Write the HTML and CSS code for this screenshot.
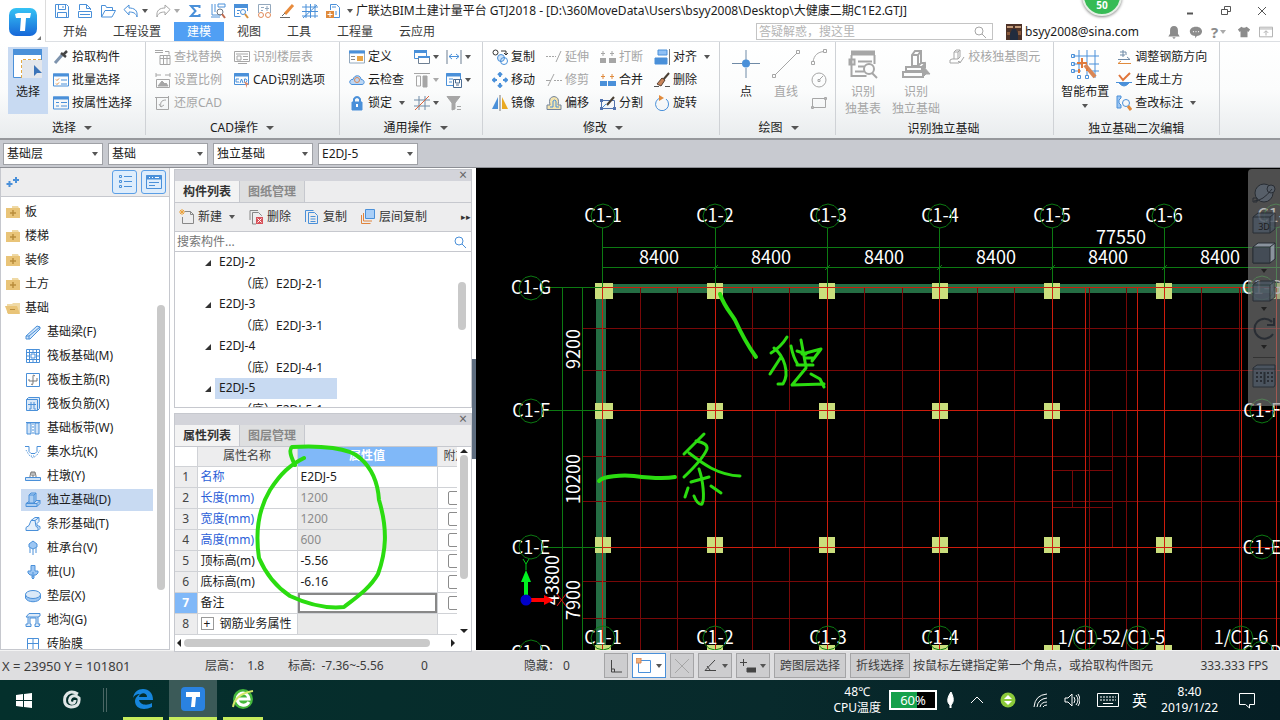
FILE: index.html
```html
<!DOCTYPE html>
<html lang="zh-CN">
<head>
  <meta charset="UTF-8">
  <title>广联达BIM土建计量平台 GTJ2018</title>
  <link rel="stylesheet" href="styles.css">
</head>
<body>

  <!-- shared icons -->
  <svg class="sprite" aria-hidden="true">
    <symbol id="folder" viewBox="0 0 16 16"><path d="M7 4V2h6l1 2z" fill="#efd9a5" stroke="none"/><path d="M1 4h14v10H1z" fill="#e9c478" stroke="none"/><path d="M8 6v6M5 9h6" stroke="#b98d3c" stroke-width="1.500"/></symbol>
    <symbol id="glass" viewBox="0 0 16 16"><circle cx="7" cy="7" r="4"/><path d="M10 10l4 4"/></symbol>
    <symbol id="bubble" viewBox="-13 -13 26 26"><path d="M0-12L6-10.400 10.400-6 12 0 10.400 6 6 10.400 0 12-6 10.400-10.400 6-12 0-10.400-6-6-10.400z" fill="none" stroke="#0c7a12"/></symbol>
  </svg>

  <header class="header">
    <div class="logo">
      <svg width="28" height="28" viewBox="0 0 28 28"><defs><linearGradient id="lg" x2="0" y2="1"><stop stop-color="#35c3f5"/><stop offset="1" stop-color="#1767d8"/></linearGradient></defs><rect width="28" height="28" rx="7" fill="url(#lg)"/><path d="M6 6l3-1h13l-1 5h-4l-1 13h-5l1-13H7z" fill="#fff"/></svg>
      <span class="corner"></span>
    </div>
    <div class="header-rows">
      <div class="title-row">
        <nav class="quick">
          <button aria-label="保存"><svg class="ico" viewBox="0 0 16 16"><path d="M1.500 1.500h11l2 2v11h-13zM4.500 1.500v5h7v-5M3.500 14.500v-5h9v5M9 3v2"/></svg></button>
          <button aria-label="新建"><svg class="ico" viewBox="0 0 16 16"><path d="M2.500 7V1.500h7l4 4V7M9.500 1.500v4h4M1.500 8.500h13v6h-13zM3 11.500h10"/></svg></button>
          <button aria-label="打开"><svg class="ico" viewBox="0 0 16 16"><path d="M1.500 14V2.500h4l1 2h6V7M1.500 14L5 7.500h10.500L12 14z"/></svg></button>
          <button aria-label="撤销"><svg class="ico" viewBox="0 0 16 16"><path d="M1 6.500L6 2v3c5 0 9 2 8 9-1-4-4-5-8-5v3z"/></svg><i class="arrow"></i></button>
          <button aria-label="重做"><svg class="ico gray" viewBox="0 0 16 16"><path d="M15 6.500L10 2v3c-5 0-9 2-8 9 1-4 4-5 8-5v3z"/></svg><i class="arrow light"></i></button>
          <button aria-label="汇总计算"><svg class="ico" viewBox="0 0 16 16"><path d="M12.500 5V3H4l4.500 5L4 13h8.500v-2" stroke-width="2"/></svg></button>
          <button aria-label="查看工程量"><svg class="ico" viewBox="0 0 16 16"><path d="M2 1v11h9M5 1v8M8 4h7V1H8zM1 14h9"/><circle cx="10" cy="9" r="3" stroke="#6b7784"/><path d="M12 11l3 4" stroke="#c06a4e" stroke-width="2"/></svg></button>
          <button aria-label="查看报表"><svg class="ico" viewBox="0 0 16 16"><path d="M1 3h14" stroke-width="4"/><path d="M1.500 4v9.500h6M14.500 4v4M4 7.500h3M4 10.500h2"/><circle cx="10" cy="9" r="2.500"/><path d="M12 11l3 4" stroke="#d8913c" stroke-width="2"/></svg></button>
          <button aria-label="检查"><svg class="ico" viewBox="0 0 16 16"><path d="M2.500 10V1.500h12V10M5 4.500h3M5 7.500h2M11 3v5M9 5.500h4" stroke="#93a8bd"/><circle cx="5" cy="12" r="2.500" stroke="#e08a5a"/><circle cx="12" cy="12" r="2.500" stroke="#e08a5a"/></svg></button>
          <button aria-label="画笔"><svg class="ico" viewBox="0 0 16 16"><path d="M14 2L6 11" stroke="#e88b3c" stroke-width="3"/><path d="M6 10l-3 3M1 14.500h10" stroke="#666"/></svg></button>
          <button aria-label="轴网"><svg class="ico" viewBox="0 0 16 16"><path d="M4 1v14M8.500 1v14M13 1v14M0 4h16M0 8.500h16M0 13h16M1 15L15 2"/></svg></button>
          <button aria-label="导入"><svg class="ico" viewBox="0 0 16 16"><path d="M5.500 7V1.500h6l3 3v10H9M7 4h4M11 12V8"/><path d="M1 8h8v7H1z" fill="#e08a3c" stroke="none"/><path d="M5 9v5M2.500 11.500h5" stroke="#fff"/></svg></button>
        </nav>
        <i class="arrow more"></i>
        <span class="app-title">广联达BIM土建计量平台 GTJ2018 - [D:\360MoveData\Users\bsyy2008\Desktop\大健康二期C1E2.GTJ]</span>
        <div class="window-buttons">
          <button aria-label="最小化"><svg width="12" height="12"><path d="M3 8.500h6" stroke-width="2"/></svg></button>
          <button aria-label="还原"><svg width="12" height="12"><path d="M1.500 4.500h6v5h-6zM4.500 4V1.500h6v5H8"/></svg></button>
          <button aria-label="关闭"><svg width="12" height="12"><path d="M2 2l8 8M10 2l-8 8"/></svg></button>
        </div>
      </div>
      <div class="tab-row">
        <nav class="tabs">
          <button>开始</button><button>工程设置</button><button class="active">建模</button><button>视图</button><button>工具</button><button>工程量</button><button>云应用</button>
        </nav>
        <div class="account">
          <div class="ask"><input type="text" aria-label="搜索" placeholder="答疑解惑，搜这里"><svg class="ico gray" viewBox="0 0 16 16"><use href="#glass"/></svg></div>
          <svg class="avatar" viewBox="0 0 16 16"><path d="M0 0h16v16H0z" fill="#4d3227"/><path d="M1 2h6v2H1zM9 2h6v2H9z" fill="#c39b7a"/><path d="M6 5h4l2 5v6H4v-6z" fill="#222c3e"/><path d="M1 8h3v3H1zM12 7h3v4h-3z" fill="#8a5a3c"/></svg>
          <span class="mail">bsyy2008@sina.com</span>
          <div class="tray">
            <svg class="solid" viewBox="0 0 16 16"><path d="M8 1c3 0 4.500 2 4.500 5v4l2 3h-13l2-3V6C3.500 3 5 1 8 1zM6 14h4l-2 2z"/></svg>
            <svg class="solid" viewBox="0 0 16 16"><path d="M8 2c9 0 9 10 1 10.500L7 15v-2.500C-1.500 12-1 2 8 2z"/><path d="M4.500 7.500h1M7.500 7.500h1M10.500 7.500h1" stroke="#fff" stroke-width="1.500"/></svg>
            <span class="help">?<i class="arrow light"></i></span>
            <svg class="solid" viewBox="0 0 16 16"><path d="M5 2q3 2 6 0l4 3-2 3-1-1v7H4V7L3 8 1 5z"/></svg>
            <svg class="ico gray" viewBox="0 0 16 16"><path d="M.5 2.500h15v11H.5zM.5 4.500h15M8 12V7M5.500 9L8 6.500 10.500 9"/></svg>
          </div>
        </div>
      </div>
    </div>
    <span class="ball">50</span>
  </header>

  <section class="ribbon">
    <div class="group pick">
      <div class="group-body g5">
        <button class="big picked"><svg class="ico" viewBox="0 0 30 30"><path d="M.5.500h28v28H.5z" fill="#fff"/><path d="M.5.500h28v5H.5z" fill="#4a90d9"/><path d="M9 11h20v18H9z" fill="#e4e7ec" stroke="none"/><path d="M8.500 29V10.500H29" stroke="#e3aa45" stroke-dasharray="3 2"/><path d="M21 16v11l3-3h5z" fill="#3c74b8" stroke="none"/></svg>选择</button>
        <div class="col">
          <button><svg class="ico" viewBox="0 0 16 16"><path d="M2 14l7-8" stroke="#7d93ad" stroke-width="3"/><path d="M10 6l4-4M8 4l5 4" stroke="#444" stroke-width="2.500"/></svg>拾取构件</button>
          <button><svg class="ico" viewBox="0 0 16 16"><path d="M.5 2h15v12H.5z"/><path d="M0 3h16" stroke-width="3"/><path d="M3 7.500l1 1 2-2M3 11.500l1 1 2-2" stroke="#e08a3c"/><path d="M8 8h6M8 12h6"/></svg>批量选择</button>
          <button><svg class="ico" viewBox="0 0 16 16"><path d="M.5 2h15v12H.5z"/><path d="M0 3h16" stroke-width="3"/><path d="M3 7.500h3M8 7.500h6M3 11h3M8 11h6"/></svg>按属性选择</button>
        </div>
      </div>
      <h3>选择<i class="arrow big-arrow"></i></h3>
    </div>

    <div class="group cad">
      <div class="group-body g12">
        <div class="col">
          <button disabled><svg class="ico" viewBox="0 0 16 16"><path d="M0 1.500h8M0 3.500h8M10 2.500h4v3M5 6.500h10v9H5zM5 9.500h10M8.500 7v8M12 7v8"/></svg>查找替换</button>
          <button disabled><svg class="ico" viewBox="0 0 16 16"><path d="M1 3h5M10 3h5M1 1v4M15 1v4M1.500 7.500h13v8h-13z"/><path d="M3 14l4-5 3 3 1-1 2 3z" fill="#a6a6a6"/></svg>设置比例</button>
          <button disabled><svg class="ico" viewBox="0 0 16 16"><path d="M1.500 2.500h12v12h-12zM0 2.500h3M13.500 1v3M11 5c-5 0-6 3-5 7M4 9l2 3 3-2"/></svg>还原CAD</button>
        </div>
        <div class="col">
          <button disabled><svg class="ico" viewBox="0 0 16 16"><path d="M.5 2.500h15v10H.5zM2 5h12M3 7h4v4H3zM9 7.500h5M9 10.500h5M4 14.500h9"/></svg>识别楼层表</button>
          <button><svg class="ico" viewBox="0 0 16 16"><path d="M.5 1.500h14v11H.5z"/><path d="M0 3h15" stroke-width="3"/><path d="M5 7H2v3h3M6 11l1.500-4L9 11M10.500 7v3.500h1.500q2-2 0-3.500z"/><path d="M10 9l5 3-2 1v3z" fill="#e08a6a" stroke="none"/></svg>CAD识别选项</button>
        </div>
      </div>
      <h3>CAD操作<i class="arrow big-arrow"></i></h3>
    </div>

    <div class="group common">
      <div class="group-body">
        <div class="col wide">
          <button><svg class="ico" viewBox="0 0 16 16"><path d="M.5 2h15v12H.5z" stroke="#93a8bd"/><path d="M0 3h16" stroke-width="3"/><path d="M2 7.500h4M2 10.500h4" stroke="#888"/><path d="M8 7h6v5H8z" fill="#e9a545" stroke="none"/></svg>定义</button>
          <button><svg class="ico" viewBox="0 0 16 16"><path d="M3 12.500c-4-1-2-6 1-5 1-5 8-5 8 0 4 0 4 5 1 5z" fill="#bcd6f3"/><circle cx="8" cy="8" r="2.500" stroke="#d98655"/></svg>云检查</button>
          <button><svg class="ico" viewBox="0 0 16 16"><path d="M5 7V4q3-4 6 0v3" stroke-width="2"/><path d="M3 7h10v8H3z" fill="#4a90d9"/><path d="M8 9v3" stroke="#fff" stroke-width="2"/></svg>锁定<i class="arrow push"></i></button>
        </div>
        <div class="col drop">
          <button aria-label="窗口"><svg class="ico" viewBox="0 0 16 16"><path d="M.5 1.500h12v8H.500z"/><path d="M0 2.500h13" stroke-width="3"/><path d="M4.500 7.500h11v7h-11z" fill="#fff" stroke="#6d7f92"/><path d="M4 8h12" stroke-width="2"/></svg><i class="arrow"></i></button>
          <button aria-label="对齐柱" disabled><svg class="ico" viewBox="0 0 16 16"><path d="M0 1.500h16M2.500 4v10h4V4z"/><path d="M9 4h4v11H9z" fill="#a6a6a6"/></svg><i class="arrow"></i></button>
          <button aria-label="轴线"><svg class="ico slate" viewBox="0 0 16 16"><path d="M5 1v14M11 1v14M0 5h16M0 11h16"/><path d="M1 15L15 1" stroke="#d9643c"/></svg><i class="arrow"></i></button>
        </div>
        <div class="col drop">
          <button aria-label="长度标注"><svg class="ico" viewBox="0 0 16 16"><path d="M1 1v14M15 1v14" stroke="#6d7f92"/><path d="M3 7.500h10M6 5L3 7.500 6 10M10 5l3 2.500-3 2.500"/></svg><i class="arrow"></i></button>
          <button aria-label="图元存盘"><svg class="ico" viewBox="0 0 16 16"><path d="M.5 1.500h14v12H.5z"/><path d="M0 3h15" stroke-width="3"/><path d="M3 7h4M3 10h3"/><path d="M7.500 7.500h8v8h-8z" fill="#fff" stroke="#4c6c92"/><path d="M9.500 8v3h4V8M10 13h3" stroke="#4c6c92"/></svg><i class="arrow"></i></button>
          <button aria-label="图元过滤"><svg class="ico gray" viewBox="0 0 16 16"><path d="M1 1.500h13L9 8v6l-3 1V8z" fill="#a6a6a6"/><path d="M11 11.500h4M11 14.500h4"/></svg></button>
        </div>
      </div>
      <h3>通用操作<i class="arrow big-arrow"></i></h3>
    </div>

    <div class="group modify">
      <div class="group-body g11">
        <div class="col">
          <button><svg class="ico" viewBox="0 0 16 16"><circle cx="3.500" cy="3.500" r="2.500" stroke="#333"/><circle cx="9" cy="9" r="3.500" fill="#cfe3f8"/><circle cx="12" cy="12" r="3.500"/><path d="M9 2h5v4M12 4l2 2 2-2" stroke="#333"/></svg>复制</button>
          <button><svg class="ico" viewBox="0 0 16 16"><path d="M8 1v4M6 3l2-2 2 2M8 15v-4M6 13l2 2 2-2M1 8h4M3 6L1 8l2 2M15 8h-4M13 6l2 2-2 2" stroke-width="2"/></svg>移动</button>
          <button><svg class="ico" viewBox="0 0 16 16"><path d="M6 2v12H0z" fill="#4a90d9" stroke="none"/><path d="M10 2v12h6z" fill="#e9a922" stroke="none"/><path d="M8 0v16" stroke="#777"/></svg>镜像</button>
        </div>
        <div class="col">
          <button disabled><svg class="ico" viewBox="0 0 16 16"><path d="M0 7.500h10" stroke-dasharray="2 1"/><path d="M10 13l5-11"/></svg>延伸</button>
          <button disabled><svg class="ico" viewBox="0 0 16 16"><path d="M0 8.500h5M2 14L8 2"/><path d="M8 8.500h8" stroke-dasharray="2 1"/></svg>修剪</button>
          <button><svg class="ico" viewBox="0 0 16 16"><path d="M1 14.500V10h3q-2-8 4-8.500 6 .5 4 8.500h3v4.500z" fill="#f4e4ae" stroke="#72839a"/><path d="M4 12h3V6q2-2 3 0v6h3"/></svg>偏移</button>
        </div>
        <div class="col">
          <button disabled><svg class="ico" viewBox="0 0 16 16"><path d="M0 9h6v5H0zM9 9h7v5H9z" fill="#a6a6a6" stroke="none"/><path d="M3 7V2M1 4.500h4M12 7V2M10 4.500h4"/></svg>打断</button>
          <button><svg class="ico" viewBox="0 0 16 16"><path d="M0 9h7v5H0zM8 9h8v5H8z" fill="#4a90d9" stroke="none"/><path d="M3 7V2M1 4.500h4M12 7V2M10 4.500h4" stroke="#e08a3c"/></svg>合并</button>
          <button><svg class="ico" viewBox="0 0 16 16"><path d="M1.500 5.500h13v8h-13z" stroke="#5273ae"/><path d="M0 15L6 9" stroke="#4a90d9"/><path d="M7 10l7-8" stroke="#4a4035" stroke-width="2"/><path d="M0 4h3v3H0zM0 12h3v3H0zM13 12h3v3h-3z" fill="#5273ae" stroke="none"/></svg>分割</button>
        </div>
        <div class="col">
          <button><svg class="ico" viewBox="0 0 16 16"><path d="M4 1h9v5H4z" fill="#8fc0f5"/><path d="M1 9h12v6H1z" fill="#4a90d9"/><path d="M15.500 0v16" stroke="#777"/></svg>对齐<i class="arrow push"></i></button>
          <button><svg class="ico" viewBox="0 0 16 16"><path d="M9 8l6-7" stroke="#4a4035" stroke-width="2"/><path d="M3 12l5-6 3 2-4 6z" fill="#c9855a" stroke="#5a4334"/><path d="M0 14.500h5M11 14.500h5" stroke="#555"/></svg>删除</button>
          <button><svg class="ico" viewBox="0 0 16 16"><path d="M12 4a6.500 6.500 0 1 1-6-1"/><path d="M5 0l5 3-5 3z" fill="#e08a3c" stroke="none"/></svg>旋转</button>
        </div>
      </div>
      <h3>修改<i class="arrow big-arrow"></i></h3>
    </div>

    <div class="group draw">
      <div class="group-body">
        <button class="big"><svg class="ico slate" viewBox="0 0 30 30"><path d="M15 1v10M15 19v10M1 14.500h10M19 14.500h10"/><circle cx="15" cy="14.500" r="4" fill="#4a90d9" stroke="none"/></svg>点</button>
        <button class="big" disabled><svg class="ico" viewBox="0 0 30 30"><path d="M4 26L26 4M1.500 25.500h3v3h-3zM25.500 1.500h3v3h-3z"/></svg>直线</button>
        <div class="col">
          <button aria-label="圆弧" disabled><svg class="ico" viewBox="0 0 16 16"><path d="M2 13C3 6 7 3 13 2.500M.5 12.500h3v3h-3zM12.500.500h3v3h-3z"/></svg></button>
          <button aria-label="圆" disabled><svg class="ico" viewBox="0 0 16 16"><circle cx="8" cy="8" r="7"/><path d="M7 7.500h2v2H7zM9 7l3-3"/></svg></button>
          <button aria-label="矩形" disabled><svg class="ico" viewBox="0 0 16 16"><path d="M1.500 3.500h13v9h-13zM.5 11.500h2v2h-2zM13.500 2.500h2v2h-2z"/></svg></button>
        </div>
      </div>
      <h3>绘图<i class="arrow big-arrow"></i></h3>
    </div>

    <div class="group detect">
      <div class="group-body g9">
        <button class="big" disabled><svg class="ico" viewBox="0 0 30 30"><path d="M3 4h24" stroke-width="5"/><path d="M3.500 6v21h15M26.500 6v9M10 12.500h14M10 17.500h6M7 22.500h9M1.500 10.500h5v5h-5z" stroke-width="2"/><circle cx="21" cy="20" r="5" stroke-width="2"/><path d="M24 24l5 5" stroke-width="2"/></svg>识别<br>独基表</button>
        <button class="big" disabled><svg class="ico" viewBox="0 0 30 30"><path d="M11 17V6l3-4h6v12l-3 3zM11 6h6v11M17 6l3-4M5 22v-4h16v4zM2 28v-5h20v5zM21 18l3-3v4M20 14h4" stroke-width="2"/><path d="M22 17v11l3-3h4z" fill="#a6a6a6"/></svg>识别<br>独立基础</button>
        <div class="col">
          <button disabled><svg class="ico" viewBox="0 0 16 16"><path d="M5 10V3l2-2h4v7l-2 2zM5 3h4v7M9 3l2-2M1 14v-3l2-1h2M1 14h9l1-2M9 12l2 2 4-6"/></svg>校核独基图元</button>
        </div>
      </div>
      <h3>识别独立基础</h3>
    </div>

    <div class="group smart">
      <div class="group-body g7">
        <button class="big"><svg class="ico" viewBox="0 0 30 30"><path d="M9 1v20M17 1v25M25 1v28M3 7h26M3 15h9M3 22h8M19 15h10M20 22h9M1.500 5.500h3v3h-3zM1.500 13.500h3v3h-3zM1.500 20.500h3v3h-3zM7.500 26.500h3v3h-3zM15.500 26.500h3v3h-3z"/><path d="M15 16l10 12" stroke="#d98655" stroke-width="4"/><path d="M12 9v10M7 14h10M9 20v4M17 19v3" stroke="#e07a3c" stroke-width="2"/></svg>智能布置<i class="arrow"></i></button>
        <div class="col">
          <button><svg class="ico slate" viewBox="0 0 16 16"><path d="M7 1v7M4 3h6v3M4 6h5M2 10.500h12M11 8l3 2.500"/><path d="M15 14.500H2M5 12l-3 2.500" stroke="#e08a3c"/></svg>调整钢筋方向</button>
          <button><svg class="ico" viewBox="0 0 16 16"><path d="M3 3l4 5 7-7" stroke="#e0763c" stroke-width="2"/><path d="M0 10.500h16M3 11q5 6 10 0" fill="#4a90d9"/></svg>生成土方</button>
          <button><svg class="ico" viewBox="0 0 16 16"><path d="M1 1h4v2l-2 2v3l2 2v3H1z" fill="#9cc6f3"/><circle cx="10" cy="8" r="3.500"/><path d="M12 11l3 4" stroke="#e08a3c" stroke-width="3"/></svg>查改标注<i class="arrow push"></i></button>
        </div>
      </div>
      <h3>独立基础二次编辑</h3>
    </div>
  </section>

  <section class="selectors">
    <span class="combo"><select aria-label="楼层"><option>基础层</option></select></span>
    <span class="combo"><select aria-label="构件大类"><option>基础</option></select></span>
    <span class="combo"><select aria-label="构件类型"><option>独立基础</option></select></span>
    <span class="combo"><select aria-label="构件"><option>E2DJ-5</option></select></span>
  </section>

  <main class="main">
    <aside class="nav">
      <div class="nav-head">
        <svg class="ico plus" viewBox="0 0 16 16"><path d="M3.500 7v6M.5 10h6M10 3v6M7 6h6" stroke-width="2"/></svg>
        <button aria-label="列表"><svg class="ico" viewBox="0 0 16 16"><path d="M2.500 1.500h2v2h-2zM2.500 6.500h2v2h-2zM2.500 11.500h2v2h-2zM7 2.500h8M7 7.500h8M7 12.500h8"/></svg></button>
        <button aria-label="视图"><svg class="ico" viewBox="0 0 16 16"><path d="M.5 1.500h15v13H.5z"/><path d="M0 3.500h16" stroke-width="4"/><path d="M3 3.500h1M6 3.500h1M9 3.500h4" stroke="#fff"/><path d="M3 8.500h10M3 11.500h6"/></svg></button>
      </div>
      <div class="nav-body">
        <ul class="nav-list">
          <li><svg class="ico"><use href="#folder"/></svg>板</li>
          <li><svg class="ico"><use href="#folder"/></svg>楼梯</li>
          <li><svg class="ico"><use href="#folder"/></svg>装修</li>
          <li><svg class="ico"><use href="#folder"/></svg>土方</li>
          <li><svg class="ico" viewBox="0 0 16 16"><path d="M2 13V4h5l1-1h7v10z" fill="#efd9a5" stroke="none"/><path d="M0 6h12l3 8H3z" fill="#e9c478" stroke="none"/><path d="M5 9.500h5" stroke="#b98d3c"/></svg>基础</li>
          <li class="child"><svg class="ico" viewBox="0 0 16 16"><path d="M1 12L12 2l3 1v2L5 15H1zM1 12h3v3M4 12L15 3" fill="#cfe3f8"/></svg>基础梁(F)</li>
          <li class="child"><svg class="ico" viewBox="0 0 16 16"><path d="M1.500 1.500h13v13h-13zM4.500 1v14M11.500 1v14M1 4.500h14M1 11.500h14M8 1v3M8 12v3M1 8h3M12 8h3M6 6h4v4H6z"/></svg>筏板基础(M)</li>
          <li class="child"><svg class="ico" viewBox="0 0 16 16"><path d="M1.500 1.500h13v13h-13z"/><path d="M10 4q-2-2-2 0v7q0 3-2 1M4 7v2h8V6" stroke="#777"/></svg>筏板主筋(R)</li>
          <li class="child"><svg class="ico" viewBox="0 0 16 16"><path d="M1.500 3.500h11v11h-11zM1.500 3.500l2-2h11v11l-2 2M3 8.500h8M6 6v7H4M9 6v7h2" fill="#dbe9f8"/></svg>筏板负筋(X)</li>
          <li class="child"><svg class="ico" viewBox="0 0 16 16"><path d="M2 3h4v11H2zM10 3h4v11h-4zM1 2.500h14" fill="#cfe3f8"/><path d="M8 3v11" stroke-dasharray="2 1"/></svg>基础板带(W)</li>
          <li class="child"><svg class="ico" viewBox="0 0 16 16"><path d="M0 2.500h4v5l2 2h4l2-2v-5h4"/><path d="M1 6l3 5 4 3 4-3 3-5M6 12h4" stroke-dasharray="1 1"/></svg>集水坑(K)</li>
          <li class="child"><svg class="ico" viewBox="0 0 16 16"><path d="M.5 9.500h15v3H.5z" fill="#cfe3f8"/><path d="M5 9V8l1-4h4l1 4v1M7 4v4h2V4" stroke="#777"/></svg>柱墩(Y)</li>
          <li class="child on"><svg class="ico" viewBox="0 0 16 16"><path d="M4 11V3l2-2h5v8l-2 2zM4 3h5v8M9 3l2-2M1 14.500v-3l3-2M1 11.500h11v3H1M12 11.500l3-3v3l-3 3M11 8.500h4" fill="#aacdf2"/></svg>独立基础(D)</li>
          <li class="child"><svg class="ico" viewBox="0 0 16 16"><path d="M1 14.500v-3l3-2 2-5 4-3h4v4l-2 2v2l3 1v2l-2 2zM6 4.500h4l1 6 2 1v3M10 4.500l4-3" fill="#e4effb"/></svg>条形基础(T)</li>
          <li class="child"><svg class="ico" viewBox="0 0 16 16"><path d="M8 1l4 3v3L8 9 4 7V4z" fill="#9cc6f3"/><path d="M5 8v5M11 8v5M8 9v6"/></svg>桩承台(V)</li>
          <li class="child"><svg class="ico" viewBox="0 0 16 16"><path d="M6 1.500h4V7h3v2l-2 2H9v3l-1 1-1-1v-3H5L3 9V7h3z" fill="#9cc6f3"/><path d="M8 8v5"/></svg>桩(U)</li>
          <li class="child"><svg class="ico" viewBox="0 0 16 16"><path d="M.5 6v4c2 5 13 5 15 0V6" fill="#9cc6f3"/><ellipse cx="8" cy="6.500" rx="7.500" ry="4" fill="#dbe9f8"/></svg>垫层(X)</li>
          <li class="child"><svg class="ico" viewBox="0 0 16 16"><path d="M1 5l3-3.500h11V4l-2 1zM3 5v7H1v2.500h5V12H5V6h6v6h-1v2.500h4L15 12h-2V5" fill="#dbe9f8"/></svg>地沟(G)</li>
          <li class="child"><svg class="ico" viewBox="0 0 16 16"><path d="M2.500 2.500h11v12h-11zM2 7.500h12M8 3v12"/></svg>砖胎膜</li>
        </ul>
        <div class="thumb"></div>
      </div>
    </aside>

    <div class="side">
      <section class="panel">
        <div class="strip">×</div>
        <div class="panel-tabs"><button class="active">构件列表</button><button>图纸管理</button></div>
        <div class="tools">
          <button><svg class="ico" viewBox="0 0 16 16"><path d="M5.500 2.500h6l3 3v9h-11V8M11.500 2.500v3h3" stroke="#888"/><path d="M3 0v6M0 3h6M1 1l4 4M5 1L1 5" stroke="#eba13a"/></svg>新建<i class="arrow push"></i></button>
          <button><svg class="ico" viewBox="0 0 16 16"><path d="M2 11V1.500h8M4.500 7V3.500h6l3 3V7M4.500 7v8H8" stroke="#888"/><path d="M8 8h7v7H8z" fill="#d8525a" stroke="none"/><path d="M9.500 9.500l4 4M13.500 9.500l-4 4" stroke="#fff"/></svg>删除</button>
          <button><svg class="ico" viewBox="0 0 16 16"><path d="M1.500 13V1.500h8M4.500 3.500h6l3 3v8h-9zM6.500 7.500h5M6.500 10h5M6.500 12.500h5"/></svg>复制</button>
          <button><svg class="ico" viewBox="0 0 16 16"><path d="M5.500.500h9v9h-9z" fill="#a9cff8"/><path d="M3.500 4v8H12M1.500 6v8.500h9" stroke="#e0843c"/></svg>层间复制</button>
          <span class="next">▸▸</span>
        </div>
        <div class="find"><input type="text" aria-label="搜索构件" placeholder="搜索构件..."><svg class="ico" viewBox="0 0 16 16"><use href="#glass"/></svg></div>
        <div class="tree-box">
          <ul class="tree">
            <li><span>E2DJ-2</span></li>
            <li class="leaf">（底）E2DJ-2-1</li>
            <li><span>E2DJ-3</span></li>
            <li class="leaf">（底）E2DJ-3-1</li>
            <li><span>E2DJ-4</span></li>
            <li class="leaf">（底）E2DJ-4-1</li>
            <li><span class="on">E2DJ-5</span></li>
            <li class="leaf">（底）E2DJ-5-1</li>
          </ul>
          <div class="thumb"></div>
        </div>
      </section>

      <section class="panel props">
        <div class="strip">×</div>
        <div class="panel-tabs"><button class="active">属性列表</button><button>图层管理</button></div>
        <div class="grid-box">
          <div class="grid-clip">
            <table>
              <tr><th class="num blank"></th><th class="name">属性名称</th><th class="value">属性值</th><th>附加</th></tr>
              <tr><td class="num">1</td><td class="key">名称</td><td>E2DJ-5</td><td></td></tr>
              <tr><td class="num">2</td><td class="key">长度(mm)</td><td class="ro">1200</td><td><input type="checkbox" aria-label="长度附加"></td></tr>
              <tr><td class="num">3</td><td class="key">宽度(mm)</td><td class="ro">1200</td><td><input type="checkbox" aria-label="宽度附加"></td></tr>
              <tr><td class="num">4</td><td class="key">高度(mm)</td><td class="ro">600</td><td><input type="checkbox" aria-label="高度附加"></td></tr>
              <tr><td class="num">5</td><td>顶标高(m)</td><td>-5.56</td><td><input type="checkbox" aria-label="顶标高附加"></td></tr>
              <tr><td class="num">6</td><td>底标高(m)</td><td>-6.16</td><td><input type="checkbox" aria-label="底标高附加"></td></tr>
              <tr><td class="num now">7</td><td>备注</td><td class="edit"><input type="text" aria-label="备注"></td><td><input type="checkbox" aria-label="备注附加"></td></tr>
              <tr><td class="num">8</td><td><div class="parent"><button class="expand" aria-label="展开">+</button>钢筋业务属性</div></td><td class="ro"></td><td></td></tr>
            </table>
          </div>
          <div class="vbar"><i class="up"></i><div class="thumb"></div><i class="down"></i></div>
        </div>
        <div class="hbar"><i class="left"></i><div class="thumb"></div><i class="right"></i></div>
        <svg class="ink" viewBox="250 440 140 172"><path d="M295 465C290 455 289 449 292 447 320 445 350 448 360 458 374 470 378 485 379 500 388 530 386 552 378 574 370 588 357 597 344 607 325 609 305 603 290 596 275 586 265 572 259 558 254 525 261 505 270 490 281 473 290 465 304 458"/></svg>
      </section>
    </div>

    <div class="splitter"><i></i></div>

    <div class="canvas">
      <svg class="plan" width="100%" height="100%">
        <g transform="translate(-476 -168)">
          <!-- walls -->
          <path d="M596 284H1280V293H606V650H596z" fill="#256d43"/>
          <!-- footings -->
          <path class="pad" d="M595 283h18v16h-18zM707 283h16v16h-16zM819 283h16v16h-16zM932 283h16v16h-16zM1044 283h16v16h-16zM1156 283h16v16h-16zM1270 283h10v16h-10zM595 403h18v16h-18zM707 403h16v16h-16zM819 403h16v16h-16zM932 403h16v16h-16zM1044 403h16v16h-16zM595 537h16v16h-16zM707 537h16v16h-16zM819 537h16v16h-16zM932 537h16v16h-16zM1044 537h16v16h-16zM1156 537h16v16h-16zM595 645h16v6h-16zM707 645h16v6h-16zM819 645h16v6h-16zM932 645h16v6h-16zM1044 645h16v6h-16zM1156 645h16v6h-16z"/>
          <!-- secondary beams -->
          <path class="thin" d="M640.500 288V650M677.500 288V650M752.500 288V650M789.500 288V410M775.500 411V547M789.500 548V650M864.500 288V650M902.500 288V650M977.500 288V650M1014.500 288V650M1089.500 288V650M1126.500 288V650M1201.500 288V650M1239.500 288V650M583 328.500H1280M583 370.500H1280M583 456.500H1280M583 501.500H1280M583 581.500H1280M583 618.500H1280M1112.500 411V547M1053 470.500H1112M1053 507.500H1112M1072.500 470V507"/>
          <!-- dimension lines -->
          <path class="dim" d="M602.500 228V287M715.500 228V287M827.500 228V287M939.500 228V287M1052.500 228V287M1164.500 228V287M1276.500 228V287M602 247.500H1280M602 267.500H1280M562.500 287V650M582.500 287V650M543 287.500H602M543 410.500H602M543 547.500H602M713 270l5-5M825 270l5-5M937 270l5-5M1050 270l5-5M1162 270l5-5"/>
          <!-- axes -->
          <path class="axis" d="M602.500 288V650M715.500 288V650M827.500 288V650M939.500 288V650M1052.500 288V650M1164.500 288V650M1276.500 288V650M1085.500 288V650M1137.500 288V650M1241.500 288V650M602 287.500H1280M602 410.500H1280M602 547.500H1280"/>
          <g class="tag">
            <text x="603" y="222">C1-1</text><text x="715" y="222">C1-2</text><text x="828" y="222">C1-3</text><text x="940" y="222">C1-4</text><text x="1052" y="222">C1-5</text><text x="1164" y="222">C1-6</text><text x="1276" y="222">C1-7</text>
            <text x="531" y="294">C1-G</text><text x="531" y="417">C1-F</text><text x="531" y="554">C1-E</text><text x="531" y="659">C1-D</text>
            <text x="1262" y="294">C1-G</text><text x="1262" y="417">C1-F</text><text x="1262" y="554">C1-E</text><text x="1262" y="659">C1-D</text>
            <text x="603" y="644">C1-1</text><text x="715" y="644">C1-2</text><text x="828" y="644">C1-3</text><text x="940" y="644">C1-4</text><text x="1085" y="644">1/C1-5</text><text x="1138" y="644">2/C1-5</text><text x="1241" y="644">1/C1-6</text>
            <text x="659" y="264">8400</text><text x="771" y="264">8400</text><text x="884" y="264">8400</text><text x="996" y="264">8400</text><text x="1108" y="264">8400</text><text x="1220" y="264">8400</text><text x="1121" y="244">77550</text>
            <text transform="translate(580 349) rotate(-90)">9200</text><text transform="translate(580 479) rotate(-90)">10200</text><text transform="translate(580 600) rotate(-90)">7900</text><text transform="translate(559 580) rotate(-90)">43800</text>
          </g>
          <g>
            <use href="#bubble" x="590" y="203" width="26" height="26"/><use href="#bubble" x="702" y="203" width="26" height="26"/><use href="#bubble" x="815" y="203" width="26" height="26"/><use href="#bubble" x="927" y="203" width="26" height="26"/><use href="#bubble" x="1039" y="203" width="26" height="26"/><use href="#bubble" x="1151" y="203" width="26" height="26"/><use href="#bubble" x="1263" y="203" width="26" height="26"/>
            <use href="#bubble" x="518" y="275" width="26" height="26"/><use href="#bubble" x="518" y="398" width="26" height="26"/><use href="#bubble" x="518" y="534" width="26" height="26"/><use href="#bubble" x="518" y="639" width="26" height="26"/>
            <use href="#bubble" x="1249" y="275" width="26" height="26"/><use href="#bubble" x="1249" y="398" width="26" height="26"/><use href="#bubble" x="1249" y="534" width="26" height="26"/><use href="#bubble" x="1249" y="640" width="26" height="26"/>
            <use href="#bubble" x="590" y="625" width="26" height="26"/><use href="#bubble" x="702" y="625" width="26" height="26"/><use href="#bubble" x="815" y="625" width="26" height="26"/><use href="#bubble" x="927" y="625" width="26" height="26"/><use href="#bubble" x="1072" y="625" width="26" height="26"/><use href="#bubble" x="1125" y="625" width="26" height="26"/><use href="#bubble" x="1228" y="625" width="26" height="26"/>
          </g>
          <!-- coordinate arrows -->
          <path d="M524 598V582h-3l5-12 5 12h-3v16z" fill="#00f020"/><path d="M530 598h14v-3l10 5-10 5v-3h-14z" fill="#f00"/><circle cx="526" cy="600" r="5.500" fill="#0000c8"/>
          <path d="M523 559l3 5 3-5M526 564v6" fill="none" stroke="#00c818"/><path d="M557 594l9 12M566 594l-9 12" stroke="#e01010"/>
          <!-- pen notes -->
          <g class="pen">
            <path d="M720 294C725 308 731 313 735 320 741 333 748 346 756 357"/>
            <path class="fine" d="M787 337Q781 347 771 353M774 348C784 356 790 373 783 384L778 384M781 357L770 374M791 346Q793 357 798 365M801 340L806 367M797 351L806 354M802 354L821 349 812 361M806 358L813 358M797 365L813 365M806 368L792 385 824 384M811 374L820 379 824 387"/>
            <path d="M599 481C603 476 622 475 634 476 650 478 664 479 675 477"/>
            <path class="fine" d="M704 434L684 454M696 441Q708 443 707 449 703 459 684 477M689 453C702 463 717 475 740 476M691 482L709 477M699 469C703 480 705 499 702 504 699 505 696 501 694 496M688 488L685 497M711 486L721 493"/>
          </g>
        </g>
      </svg>
      <div class="viewbar">
        <button aria-label="动态观察"><svg viewBox="0 0 24 24"><circle cx="12" cy="12" r="9" fill="#5a6470"/><circle cx="19" cy="8" r="4" fill="#5a6470"/><path d="M2 20q9 0 18-12M1 17h4v4H1z"/></svg></button>
        <button aria-label="三维"><svg viewBox="0 0 24 24"><path d="M1 6l5-4h17v16l-5 4H1zM1 6h17v16M18 6l5-4" fill="#4b5664"/><text x="12" y="19">3D</text></svg></button>
        <button aria-label="俯视"><svg viewBox="0 0 24 24"><path d="M1 6l5-4h17v16l-5 4H1z" fill="#9aa5b1"/><path d="M1 6h17v16H1zM18 6l5-4" fill="#424c58"/></svg><i class="arrow"></i></button>
        <button aria-label="选择视图"><svg viewBox="0 0 24 24"><path d="M1 6l5-4h17v16l-5 4H1zM1 6h17v16M18 6l5-4" fill="#4b5664"/></svg><i class="arrow"></i></button>
        <button aria-label="旋转视图"><svg viewBox="0 0 24 24"><path d="M20 5a10 10 0 1 0 1 12M22 1v7h-7" stroke-width="2"/></svg><i class="arrow"></i></button>
        <hr>
        <button aria-label="显示设置"><svg viewBox="0 0 24 24"><path d="M1 4l4-3h18v20l-1 2H1zM1 5h22" fill="#4b5664"/><path d="M12.500 8v12M4 9h2M4 13h2M4 17h2M8 9h2M8 13h2M8 17h2M15 9h2M15 13h2M15 17h2M19 9h2M19 13h2M19 17h2" stroke-width="2"/></svg></button>
      </div>
    </div>
  </main>

  <footer class="status">
    <span class="coord">X = 23950 Y = 101801</span>
    <span class="floor">层高：&nbsp; 1.8</span>
    <span class="level">标高:&nbsp; -7.36~-5.56</span>
    <span class="zero">0</span>
    <span class="hidden-count">隐藏：&nbsp;0</span>
    <div class="modes">
      <button aria-label="正交"><svg class="ico dark" viewBox="0 0 16 16"><path d="M3.500 2v12H14M3.500 11h3v3"/></svg></button>
      <button class="drop-btn on" aria-label="捕捉"><svg class="ico" viewBox="0 0 16 16"><path d="M2.500 2.500h12v12h-12z"/><path d="M0 0h5v5H0z" fill="#f3b27a" stroke="#d98655"/></svg><i class="arrow"></i></button>
      <button aria-label="交点"><svg class="ico gray" viewBox="0 0 16 16"><path d="M1 1l14 14M15 1L1 15"/></svg></button>
      <button class="drop-btn" aria-label="角度"><svg class="ico dark" viewBox="0 0 16 16"><path d="M13 2L3 12.500h11M5 8l3 4"/></svg><i class="arrow"></i></button>
      <button class="drop-btn" aria-label="偏移"><svg class="ico dark" viewBox="0 0 16 16"><path d="M3.500 1v7M0 4.500h7"/><path d="M7 10h9v4H7z" fill="#444"/></svg><i class="arrow"></i></button>
      <button class="word">跨图层选择</button>
      <button class="word">折线选择</button>
    </div>
    <span class="tip">按鼠标左键指定第一个角点，或拾取构件图元</span>
    <span class="fps">333.333 FPS</span>
  </footer>

  <footer class="taskbar">
    <button class="task" aria-label="开始"><svg width="20" height="20" viewBox="0 0 20 20"><path d="M2 5l7-1v6H2zM10 4l8-1v7h-8zM2 11h7v6l-7-1zM10 11h8v7l-8-1z" fill="#fff"/></svg></button>
    <button class="task" aria-label="浏览器"><svg width="20" height="20" viewBox="0 0 20 20" fill="none" stroke="#e0e6e6" stroke-width="3"><path d="M16 4Q7-1 3 7q-2 9 6 10 9 0 8-9-4-4-8-1-3 4 0 6 4 1 4-3"/></svg></button>
    <span class="task-line"></span>
    <button class="task running" aria-label="Edge"><svg width="22" height="22" viewBox="0 0 22 22"><path d="M1 10C2 4 6 1 11 1c6 0 10 4 10 11H7c1 5 8 6 13 3v4C12 23 3 21 3 13c0-3 2-5 5-7-4 0-6 2-7 4zm6-1h8c0-5-7-5-8 0z" fill="#1686dd"/></svg></button>
    <button class="task running active" aria-label="GTJ2018"><svg width="24" height="24" viewBox="0 0 24 24"><rect width="24" height="24" rx="4" fill="#2a82e0"/><path d="M5 5h14v5h-4l-1 10h-4l1-10H5z" fill="#fff"/></svg></button>
    <button class="task running" aria-label="360"><svg width="22" height="22" viewBox="0 0 22 22"><circle cx="11" cy="11" r="10" fill="#45b83c"/><path d="M5 11h12c-1-8-11-8-12 0 1 7 9 8 12 3" fill="none" stroke="#fff" stroke-width="3"/><path d="M1 19Q3 6 21 3" fill="none" stroke="#d5e96a" stroke-width="2"/></svg></button>
    <div class="sys">
      <span class="two">48℃<br>CPU温度</span>
      <span class="battery">60%</span>
      <svg class="leaf-ico" width="8" height="16" viewBox="0 0 8 16"><path d="M5 0c3 6 3 10 0 13v3H4v-3C0 10 2 4 5 0z" fill="#fff"/></svg>
      <svg width="14" height="16" viewBox="0 0 14 16"><path d="M1 11l6-6 6 6"/></svg>
      <svg width="16" height="16" viewBox="0 0 16 16"><circle cx="8" cy="8" r="7.500" fill="#8bc93a" stroke="none"/><path d="M4 7l4-4 4 4zM4 9l4 4 4-4z" fill="#fff" stroke="none"/></svg>
      <svg width="16" height="16" viewBox="0 0 16 16"><path d="M2 15Q3 3 15 2M5 15Q6 7 15 6M8 15q1-5 7-5M11 15q1-2 4-2"/></svg>
      <svg width="16" height="16" viewBox="0 0 16 16"><path d="M1 6h3l4-4v12l-4-4H1zM10 5q2 3 0 6M12 3q4 5 0 10M14 2q4 6 0 12"/></svg>
      <svg class="keys" width="24" height="16" viewBox="0 0 24 16"><path d="M1.500 1.500h21v13h-21z"/><path d="M4 5h16M4 8h16" stroke-dasharray="2 1"/><path d="M7 11.500h10"/></svg>
      <span class="ime">英</span>
      <span class="two clock">8:40<br>2019/1/22</span>
      <svg width="18" height="18" viewBox="0 0 18 18"><path d="M1.500 2.500h15v11h-5V17l-4-3.500h-6z"/></svg>
    </div>
  </footer>

</body>
</html>
```
FILE: styles.css
```css
* {
  box-sizing: border-box;
}

body {
  margin: 0;
  height: 100vh;
  display: flex;
  flex-direction: column;
  overflow: hidden;
  font-family: "Noto Sans", "Noto Sans CJK SC", sans-serif;
  font-size: 12px;
  line-height: 16px;
  color: #1c1c1c;
  background: #fff;
}

button {
  display: flex;
  align-items: center;
  margin: 0;
  padding: 0;
  border: none;
  background: none;
  font: inherit;
  color: inherit;
  white-space: nowrap;
}

button:disabled {
  color: #a6a6a6;
}

input, select {
  font: inherit;
  color: inherit;
}

ul {
  list-style: none;
  margin: 0;
  padding: 0;
}

.sprite {
  position: absolute;
  width: 0;
  height: 0;
}

/* icons */
.ico {
  width: 16px;
  height: 16px;
  flex: none;
  fill: none;
  stroke: #4a90d9;
}

button:disabled .ico, .ico.gray {
  stroke: #a6a6a6;
}

.ico.slate {
  stroke: #6f8aa6;
}

.ico.dark {
  stroke: #444;
}

.arrow {
  flex: none;
  width: 0;
  height: 0;
  border: 3px solid transparent;
  border-top: 4px solid #555;
  border-bottom: none;
}

.arrow.light, button:disabled .arrow {
  border-top-color: #aaa;
}

.big-arrow {
  border-width: 4px 4px 0;
}

.thumb {
  background: #c9c9c9;
  border-radius: 4px;
}

/* header */
.header {
  position: relative;
  display: flex;
  height: 42px;
  flex: none;
}

.logo {
  position: relative;
  width: 46px;
  padding: 8px 9px;
  border-right: 1px solid #dcdcdc;
}

.corner {
  position: absolute;
  right: 4px;
  bottom: 2px;
  border: 2px solid #777;
  border-top-color: transparent;
  border-left-color: transparent;
}

.header-rows {
  flex: 1;
  border-bottom: 1px solid #dcdfe3;
}

.title-row {
  display: flex;
  align-items: center;
  height: 22px;
  padding: 0 12px 0 8px;
}

.quick {
  display: flex;
  gap: 7px;
}

.quick button {
  gap: 3px;
}

.more {
  margin: 0 3px 0 6px;
}

.app-title {
  font-size: 12px;
  white-space: nowrap;
}

.window-buttons {
  display: flex;
  gap: 24px;
  margin-left: auto;
}

.window-buttons svg {
  fill: none;
  stroke: #555;
}

.tab-row {
  display: flex;
  height: 19px;
}

.tabs {
  display: flex;
  padding-left: 4px;
}

.tabs button {
  padding: 0 13px;
  color: #3a3a3a;
}

.tabs button.active {
  background: #509ff4;
  color: #fff;
}

.account {
  display: flex;
  align-items: center;
  margin-left: auto;
  padding-right: 7px;
}

.ask {
  display: flex;
  align-items: center;
  width: 237px;
  height: 17px;
  margin-right: 13px;
  padding-right: 4px;
  border: 1px solid #c4c4c4;
}

.ask input {
  flex: 1;
  min-width: 0;
  padding: 0 2px;
  border: none;
  background: none;
}

.ask input::placeholder {
  color: #b4b4b4;
}

.avatar {
  width: 16px;
  height: 16px;
  margin-right: 3px;
}

.mail {
  width: 142px;
  font-size: 12px;
}

.tray {
  display: flex;
  align-items: center;
  gap: 8px;
}

.tray .ico, .solid {
  width: 14px;
  height: 14px;
}

.solid {
  fill: #8c8c8c;
}

.help {
  display: flex;
  align-items: center;
  gap: 2px;
  width: 18px;
  font-size: 15px;
  font-weight: bold;
  color: #8c8c8c;
}

.ball {
  position: absolute;
  top: -24px;
  right: 158px;
  width: 40px;
  height: 40px;
  padding-top: 19px;
  border: 2px solid #e6efe6;
  border-radius: 50%;
  background: #37bb55;
  box-shadow: 0 1px 3px #888;
  color: #fff;
  font-size: 10px;
  font-weight: bold;
  text-align: center;
}

/* ribbon */
.ribbon {
  display: flex;
  flex: none;
  height: 98px;
  background: linear-gradient(#fff, #fbfcfc 50%, #e9ecee);
  border-bottom: 2px solid #96989c;
}

.group {
  margin-bottom: 3px;
  padding: 3px 12px 0 9px;
  border-right: 1px solid #cfd2d6;
}

.group-body {
  display: flex;
  height: 69px;
}

.g5 {
  gap: 5px;
}

.g7 {
  gap: 7px;
}

.g9 {
  gap: 9px;
}

.g11 {
  gap: 11px;
}

.g12 {
  gap: 12px;
}

.pick {
  padding: 3px 13px 0 8px;
}

.cad {
  padding-right: 14px;
}

.modify {
  padding-right: 9px;
}

.col button {
  height: 23px;
  gap: 3px;
}

.col .push {
  margin-left: 4px;
}

.common .wide {
  width: 65px;
}

.common .drop {
  width: 32px;
}

.common {
  padding-right: 4px;
}

.big {
  flex-direction: column;
  align-self: flex-start;
  min-width: 40px;
  height: 67px;
  margin-top: 2px;
  padding-top: 2px;
  line-height: 17px;
}

.big .ico {
  width: 30px;
  height: 30px;
  margin-bottom: 4px;
}

.big .arrow {
  margin-top: 4px;
}

.picked {
  background: #c8daf2;
}

.draw {
  padding: 3px 8px 0 6px;
}

.draw .big + .col {
  margin-left: 5px;
}

.detect, .smart {
  padding-left: 7px;
}

.detect {
  padding-right: 13px;
}

.group h3 {
  display: flex;
  align-items: center;
  justify-content: center;
  gap: 8px;
  height: 24px;
  margin: 0;
  padding: 3px 0 0 4px;
  font-size: 12px;
  font-weight: normal;
}

.detect h3, .smart h3 {
  padding-top: 6px;
}

/* floor and element selectors */
.selectors {
  display: flex;
  gap: 5px;
  flex: none;
  height: 28px;
  padding: 3px;
  background: #c8cad0;
  border-bottom: 1px solid #8c8e94;
}

.combo {
  position: relative;
  width: 100px;
  height: 22px;
}

.combo select {
  width: 100%;
  height: 100%;
  padding: 0 3px;
  border: 1px solid #9fa1a6;
  border-radius: 0;
  background: #fff;
  appearance: none;
}

.combo::after {
  content: "";
  position: absolute;
  top: 9px;
  right: 5px;
  border: 3px solid transparent;
  border-top: 4px solid #555;
  border-bottom: none;
}

/* work area */
.main {
  display: flex;
  flex: 1;
  min-height: 0;
}

.nav {
  display: flex;
  flex-direction: column;
  width: 170px;
  border: 1px solid #c6c8ce;
  border-top: none;
}

.nav-head {
  display: flex;
  align-items: center;
  gap: 4px;
  flex: none;
  height: 29px;
  padding: 0 3px 0 5px;
  background: #ededee;
  border-bottom: 1px solid #c6c8ce;
}

.nav-head .plus {
  margin-right: auto;
}

.nav-head button {
  justify-content: center;
  width: 25px;
  height: 24px;
  border: 1px solid #5b9fe6;
  border-radius: 3px;
  background: #deedfc;
}

.nav-body {
  display: flex;
  flex: 1;
  min-height: 0;
}

.nav-list {
  flex: 1;
  padding-top: 4px;
  overflow: hidden;
}

.nav-list li {
  display: flex;
  align-items: center;
  gap: 4px;
  height: 22px;
  margin-bottom: 2px;
  padding-left: 4px;
}

.nav-list .child {
  gap: 6px;
  margin-left: 20px;
}

.nav-list .on {
  background: #c8daf2;
}

.nav-body .thumb {
  width: 8px;
  height: 285px;
  margin: 108px 4px 0;
}

.side {
  display: flex;
  flex-direction: column;
  gap: 5px;
  width: 298px;
  margin-left: 4px;
  padding-top: 1px;
}

.panel {
  display: flex;
  flex-direction: column;
  height: 239px;
  border: 1px solid #c6c8ce;
  background: #fff;
}

.props {
  position: relative;
  flex: 1;
}

.strip {
  flex: none;
  height: 11px;
  padding-right: 4px;
  background: #d3d4da;
  line-height: 10px;
  font-size: 14px;
  color: #666;
  text-align: right;
}

.panel-tabs {
  display: flex;
  flex: none;
  height: 22px;
  background: #ededee;
  border-bottom: 1px solid #c6c8ce;
}

.panel-tabs button {
  padding: 0 8px;
  border-right: 1px solid #c6c8ce;
  background: #dedfe0;
  color: #888;
  font-weight: bold;
}

.panel-tabs .active {
  background: #f3f3f3;
  color: #333;
}

.tools {
  display: flex;
  align-items: center;
  gap: 13px;
  flex: none;
  height: 29px;
  padding-left: 4px;
  background: #ededee;
  border-bottom: 1px solid #c6c8ce;
  color: #333;
}

.tools button {
  gap: 3px;
}

.tools .push {
  margin-left: 4px;
}

.next {
  margin-left: auto;
  font-size: 9px;
}

.find {
  display: flex;
  align-items: center;
  flex: none;
  height: 20px;
  padding-right: 3px;
  border-bottom: 1px solid #c6c8ce;
}

.find input {
  flex: 1;
  padding: 0 2px;
  border: none;
  background: none;
}

.tree-box {
  display: flex;
  flex: 1;
  min-height: 0;
  overflow: hidden;
}

.tree {
  flex: 1;
}

.tree li {
  display: flex;
  align-items: center;
  height: 21px;
  padding-left: 30px;
}

.tree li:not(.leaf)::before {
  content: "";
  margin-right: 4px;
  border: 3px solid #333;
  border-top-color: transparent;
  border-left-color: transparent;
}

.tree .leaf {
  padding-left: 65px;
}

.tree span {
  width: 122px;
  padding: 2px 4px 3px;
}

.tree .on {
  background: #c8daf2;
}

.tree-box .thumb {
  width: 8px;
  height: 48px;
  margin: 30px 5px 0;
}

.grid-box {
  display: flex;
  flex: 1;
  min-height: 0;
}

.grid-clip {
  flex: 1;
  min-width: 0;
  overflow: hidden;
}

table {
  table-layout: fixed;
  width: 302px;
  border-collapse: collapse;
}

th, td {
  height: 21px;
  padding: 0 0 0 3px;
  border: 1px solid #d0d2d6;
  border-left: none;
  border-top: none;
  text-align: left;
  white-space: nowrap;
}

th {
  height: 19px;
  padding: 0;
  background: #ededee;
  font-weight: normal;
  color: #444;
  text-align: center;
}

th:last-child {
  padding-left: 6px;
  text-align: left;
}

th.blank {
  width: 22px;
  background: #fff;
}

th.name {
  width: 100px;
}

th.value {
  width: 140px;
  background: #80b8f8;
  color: #fff;
  font-weight: bold;
}

td.num {
  padding: 0;
  background: #ededee;
  color: #444;
  text-align: center;
}

td.now {
  background: #80b8f8;
  color: #fff;
  font-weight: bold;
}

.key {
  color: #2c5fd8;
}

.ro {
  background: #e9e9e9;
  color: #8c8c8c;
}

td input[type="checkbox"] {
  display: block;
  appearance: none;
  width: 14px;
  height: 14px;
  margin: 0 0 0 7px;
  border: 1px solid #8c8c8c;
  border-radius: 2px;
}

td.edit {
  padding: 0;
}

.edit input {
  display: block;
  width: 100%;
  height: 20px;
  border: 2px solid #888;
}

.parent {
  display: flex;
  align-items: center;
  gap: 6px;
}

.expand {
  justify-content: center;
  width: 13px;
  height: 13px;
  border: 1px solid #999;
  line-height: 10px;
}

.vbar {
  display: flex;
  flex-direction: column;
  align-items: center;
  width: 14px;
  padding: 2px 0;
}

.vbar .thumb {
  width: 8px;
  height: 124px;
  margin: 2px 0 auto;
}

.up, .down, .left, .right {
  border: 4px solid transparent;
}

.up {
  border-top: none;
  border-bottom-color: #222;
}

.down {
  border-bottom: none;
  border-top-color: #222;
}

.left {
  border-left: none;
  border-right-color: #222;
}

.right {
  border-right: none;
  border-left-color: #222;
}

.hbar {
  display: flex;
  align-items: center;
  flex: none;
  height: 16px;
  padding: 0 16px 0 2px;
}

.hbar .thumb {
  width: 246px;
  height: 8px;
  margin: 0 auto 0 3px;
}

.ink {
  position: absolute;
  top: 26px;
  left: 75px;
  width: 140px;
  height: 172px;
}

.ink path, .pen path {
  fill: none;
  stroke: #2bdc10;
  stroke-width: 4px;
  stroke-linecap: round;
  stroke-linejoin: round;
}

.pen .fine {
  stroke-width: 3px;
}

.splitter {
  display: flex;
  align-items: center;
  width: 4px;
}

.splitter i {
  width: 4px;
  height: 100px;
  background: #5f6e80;
}

/* drawing area */
.canvas {
  position: relative;
  flex: 1;
  min-width: 0;
  overflow: hidden;
  background: #000;
}

.plan {
  display: block;
}

.pad {
  fill: #cade7c;
}

.thin, .axis, .dim {
  fill: none;
}

.thin {
  stroke: #780808;
}

.axis {
  stroke: #cc1c0c;
}

.dim {
  stroke: #0c7a12;
}

.tag text {
  fill: #fff;
  font-family: "Noto Sans CJK SC", sans-serif;
  font-size: 18px;
  text-anchor: middle;
}

.viewbar {
  position: absolute;
  top: 1px;
  right: 0;
  display: flex;
  flex-direction: column;
  align-items: center;
  width: 32px;
  height: 237px;
  padding-top: 12px;
  border-radius: 4px 0 0 4px;
  background: rgba(130, 130, 130, 0.6);
}

.viewbar button {
  flex-direction: column;
  gap: 4px;
  margin-bottom: 6px;
}

.viewbar svg {
  width: 24px;
  height: 24px;
  fill: none;
  stroke: #20262e;
  opacity: 0.8;
}

.viewbar text {
  fill: #111;
  stroke: none;
  font-size: 9px;
  text-anchor: middle;
}

.viewbar .arrow {
  border-top-color: #222;
}

.viewbar hr {
  width: 22px;
  margin: 2px 0 6px;
  border: none;
  border-top: 1px solid #333;
}

/* status bar */
.status {
  display: flex;
  align-items: center;
  flex: none;
  height: 30px;
  padding: 0 12px 0 2px;
  background: #dedee0;
  border-top: 1px solid #f4f4f4;
  color: #3c3c3c;
  white-space: nowrap;
}

.coord {
  width: 203px;
  font-size: 13px;
}

.floor {
  width: 83px;
}

.level {
  width: 133px;
}

.zero {
  width: 103px;
}

.hidden-count {
  width: 80px;
}

.modes {
  display: flex;
  gap: 4px;
  margin-right: 3px;
}

.modes button {
  height: 25px;
  padding: 0 3px;
  border: 1px solid #a4a4a6;
  background: #cdcdcf;
}

.modes .drop-btn {
  gap: 4px;
}

.modes .word {
  padding: 0 5px;
}

.modes .on {
  background: #fff;
  border-color: #4a90d9;
}

.fps {
  margin-left: auto;
}

/* task bar */
.taskbar {
  display: flex;
  flex: none;
  height: 40px;
  background: linear-gradient(90deg, #04302c, #082a2c 60%, #051e24);
  color: #fff;
}

.task {
  justify-content: center;
  width: 48px;
  height: 40px;
}

.task-line {
  width: 4px;
  height: 24px;
  margin: 8px 16px 0 7px;
  border: 1px solid #4a6664;
  border-top: none;
  border-bottom: none;
}

.running {
  width: 40px;
  margin-right: 6px;
  border-bottom: 3px solid #c6ec5c;
}

.running.active {
  width: 48px;
  background: #3b5a58;
}

.sys {
  display: flex;
  align-items: center;
  gap: 16px;
  margin-left: auto;
  padding-right: 24px;
}

.sys svg {
  fill: none;
  stroke: #fff;
}

.two {
  text-align: center;
}

.sys .two {
  margin-right: -8px;
}

.battery {
  width: 48px;
  height: 20px;
  border: 2px solid #fff;
  background: linear-gradient(90deg, #16a04a 60%, #000 60%);
  font-size: 13px;
  text-align: center;
}

.sys .leaf-ico {
  margin-left: -7px;
}

.sys .keys {
  margin-right: -4px;
}

.ime {
  font-size: 15px;
}

.sys .clock {
  margin: 0 4px 0 -2px;
}
```
